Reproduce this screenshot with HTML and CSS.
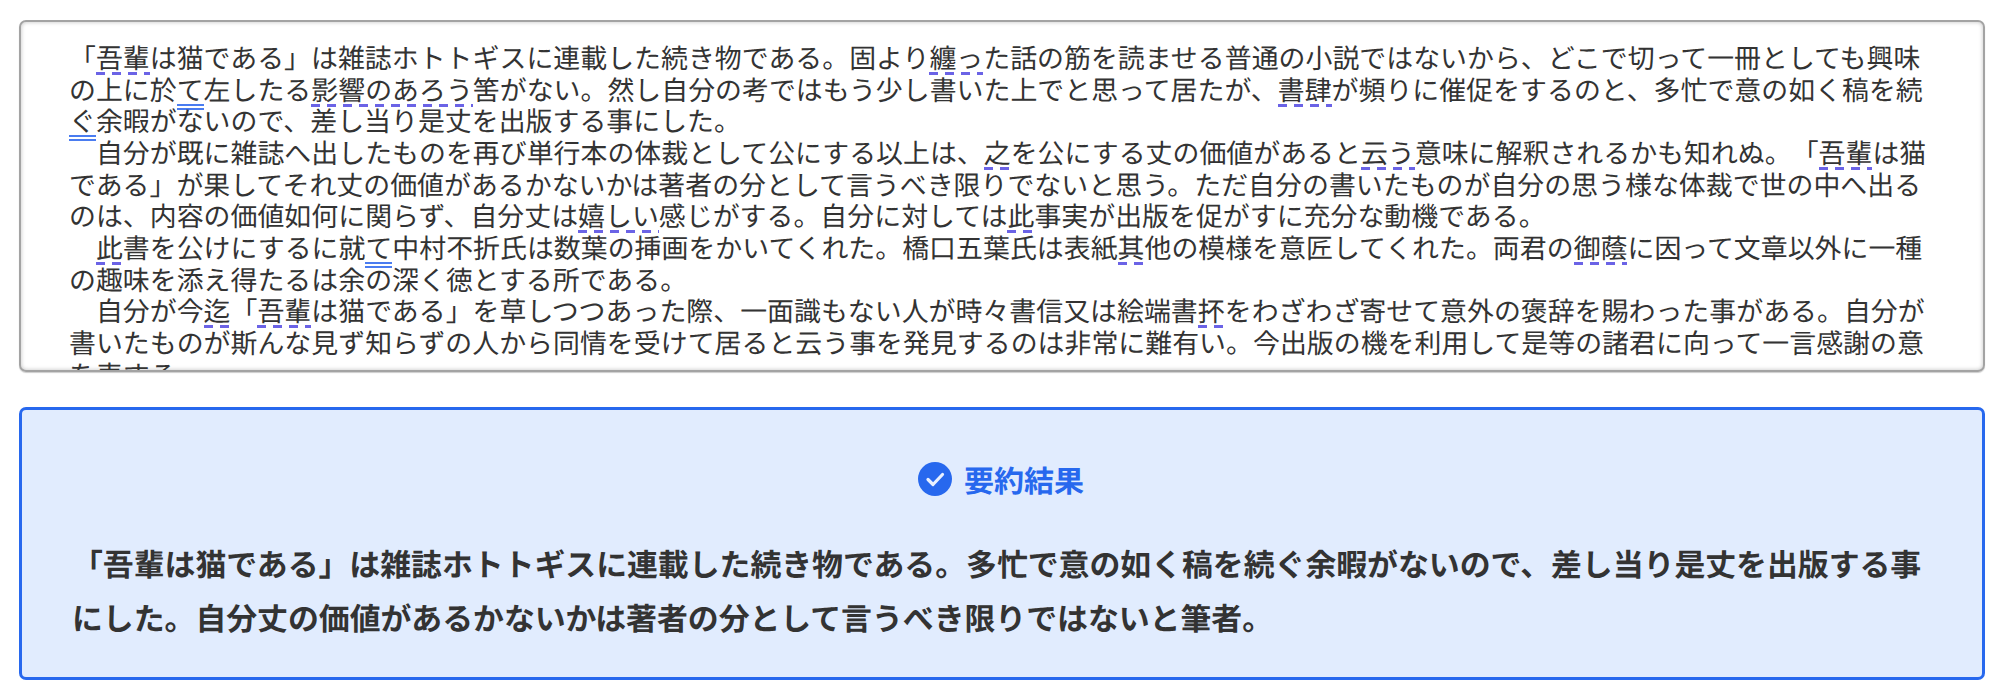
FILE: index.html
```html
<!DOCTYPE html>
<html lang="ja">
<head>
    <meta charset="UTF-8">
    <title>要約</title>
    <link rel="stylesheet" href="styles.css">
</head>
<body>
    <div class="source">
        <p>「<span class="dash">吾輩</span>は猫である」は雑誌ホトトギスに連載した続き物である。固より<span class="dash">纏っ</span>た話の筋を読ませる普通の小説ではないから、どこで切って一冊としても興味の上に於<span class="dbl">て</span>左したる<span class="dash">影響のあろう</span>筈がない。然し自分の考ではもう少し書いた上でと思って居たが、<span class="dash">書肆</span>が頻りに催促をするのと、多忙で意の如く稿を続<span class="dbl">ぐ</span>余暇がないので、差し当り是丈を出版する事にした。</p>
        <p>　自分が既に雑誌へ出したものを再び単行本の体裁として公にする以上は、<span class="dash">之</span>を公にする丈の価値があると<span class="dash">云う</span>意味に解釈されるかも知れぬ。「<span class="dash">吾輩</span>は猫である」が果してそれ丈の価値があるかないかは著者の分として言うべき限りでないと思う。ただ自分の書いたものが自分の思う様な体裁で世の中へ出るのは、内容の価値如何に関らず、自分丈は<span class="dash">嬉しい</span>感じがする。自分に対しては<span class="dash">此</span>事実が出版を促がすに充分な動機である。</p>
        <p>　<span class="dash">此</span>書を公けにするに就<span class="dbl">て</span>中村不折氏は数葉の挿画をかいてくれた。橋口五葉氏は表紙<span class="dash">其</span>他の模様を意匠してくれた。両君の<span class="dash">御蔭</span>に因って文章以外に一種の趣味を添え得たるは余の深く徳とする所である。</p>
        <p>　自分が今<span class="dash">迄</span>「<span class="dash">吾輩</span>は猫である」を草しつつあった際、一面識もない人が時々書信又は絵端書<span class="dash">抔</span>をわざわざ寄せて意外の褒辞を賜わった事がある。自分が書いたものが斯んな見ず知らずの人から同情を受けて居ると云う事を発見するのは非常に難有い。今出版の機を利用して是等の諸君に向って一言感謝の意を表する。</p>
    </div>
    <div class="result">
        <h2 class="result-title">
            <svg class="check" viewBox="0 0 34 34" aria-hidden="true">
                <circle cx="17" cy="17" r="17" fill="#2768ee"/>
                <path d="M10 17.5l5 5 9.5-10" fill="none" stroke="#e8f0ff" stroke-width="3.2" stroke-linecap="round" stroke-linejoin="round"/>
            </svg>
            要約結果
        </h2>
        <p class="result-text">「吾輩は猫である」は雑誌ホトトギスに連載した続き物である。多忙で意の如く稿を続ぐ余暇がないので、差し当り是丈を出版する事にした。自分丈の価値があるかないかは著者の分として言うべき限りではないと筆者。</p>
    </div>
</body>
</html>
```

FILE: styles.css
```css
body {
    margin: 0;
    padding: 20px 15px 0 19px;
    background: #fff;
    color: #333;
    font-family: "Noto Sans CJK JP", "Liberation Sans", sans-serif;
    text-spacing-trim: space-all;
    text-rendering: geometricPrecision;
}

/* 入力欄 */
.source {
    height: 352px;
    box-sizing: border-box;
    padding: 19px 50px 0 48px;
    overflow: hidden;
    border: 2px solid #a3a3a3;
    border-radius: 7px;
    box-shadow: inset 0 0 4px rgba(0,0,0,.25), 0 1px 1px rgba(0,0,0,.2);
    font-size: 26.9px;
    letter-spacing: .03px;
    line-height: 31.65px;
}
.source p {
    margin: 0;
}

/* 校正マーク: 破線と二重線 */
.dash,
.dbl {
    padding-bottom: 4px;
    background-repeat: repeat-x;
}
.dash {
    background-image: linear-gradient(90deg, #6b63e6 9px, transparent 9px);
    background-position: left 0 bottom 5px;
    background-size: 16px 3px;
}
.dbl {
    background-image: linear-gradient(#4a7cf0, #4a7cf0), linear-gradient(#4a7cf0, #4a7cf0);
    background-position: left 0 bottom 2px, left 0 bottom 6px;
    background-size: 100% 2px;
}

/* 要約結果 */
.result {
    height: 273px;
    box-sizing: border-box;
    margin-top: 35px;
    padding: 52px 52px 0 50px;
    border: 3px solid #2768ee;
    border-radius: 7px;
    background: #e1ecfe;
}
.result-title {
    display: flex;
    justify-content: center;
    align-items: center;
    gap: 12px;
    margin: 0;
    color: #2768ee;
    font-size: 30px;
    font-weight: 700;
    line-height: 34px;
}
.check {
    width: 34px;
    height: 34px;
}
.result-text {
    margin: 40px 0 0;
    font-size: 30.9px;
    font-weight: 700;
    letter-spacing: -.04px;
    line-height: 53.5px;
}
```
